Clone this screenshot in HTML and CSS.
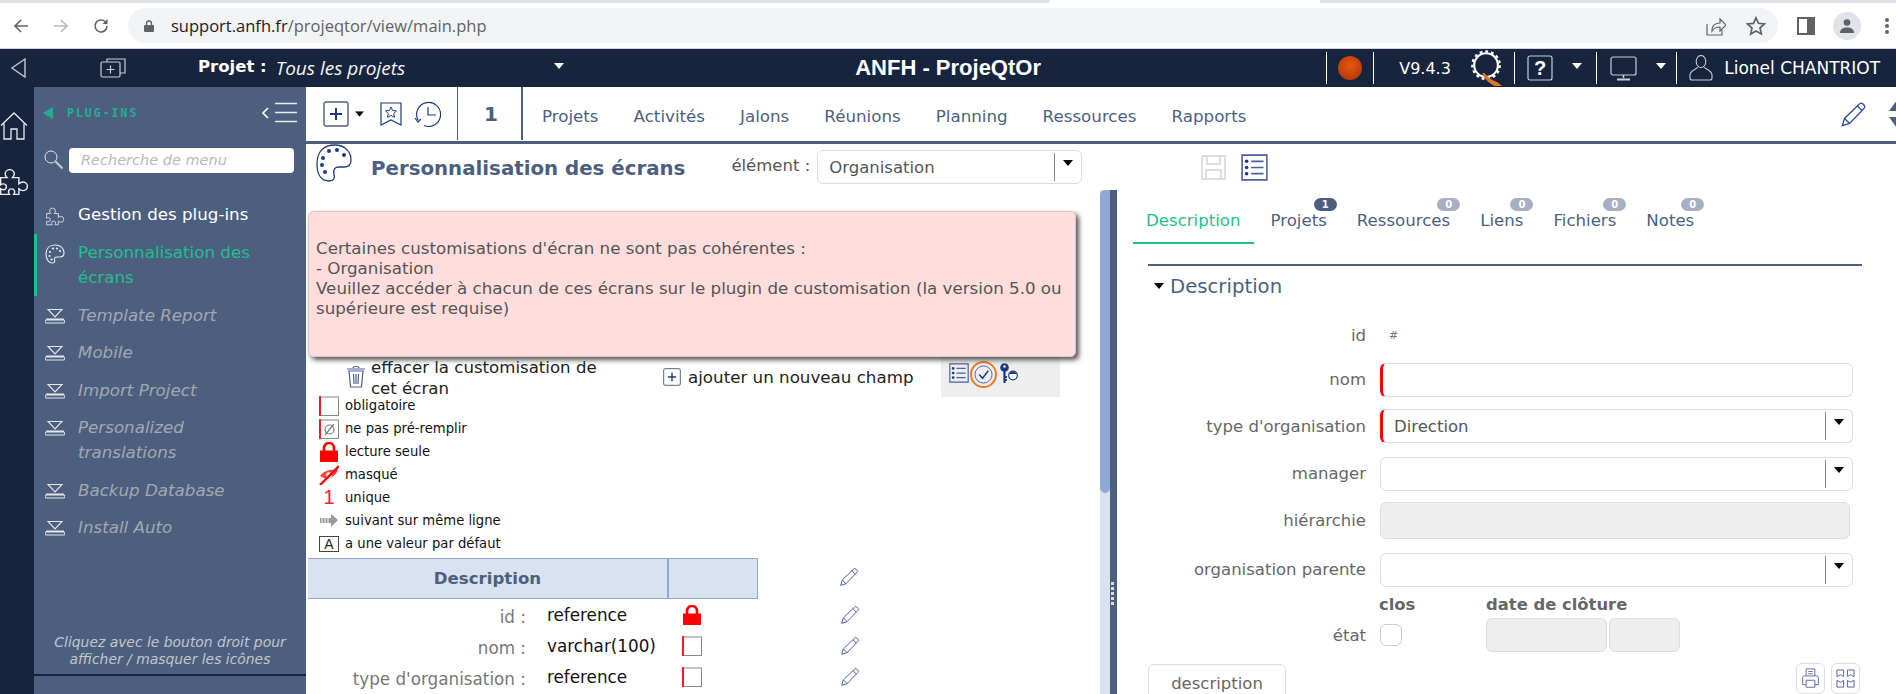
FILE: index.html
```html
<!DOCTYPE html>
<html lang="fr">
<head>
<meta charset="utf-8">
<title>ANFH - ProjeQtOr</title>
<link rel="stylesheet" href="styles.css">
</head>
<body>
<svg class="sprite" width="0" height="0" aria-hidden="true">
  <defs>
    <symbol id="puzzle" viewBox="0 0 24 24"><path d="M2 9h5c-1-1-1.500-2-1.500-3A3.500 3.500 0 0 1 12.500 6c0 1-.5 2-1.500 3h5v5c1-1 2-1.500 3-1.500a3.500 3.500 0 0 1 0 7c-1 0-2-.5-3-1.500v4.500h-4c.5-.7.800-1.300.800-2a2.400 2.400 0 0 0-4.800 0c0 .7.300 1.300.800 2H2V18c.6.500 1.300.8 2 .8a2.400 2.400 0 0 0 0-4.800c-.7 0-1.400.3-2 .8z" fill="none" stroke="currentColor" stroke-width="1.100"/></symbol>
    <symbol id="plugin" viewBox="0 0 20 16"><path d="M3 1.500h14L10 9zM1 11h18M1.500 12h17a1 1 0 0 1 0 3h-17a1 1 0 0 1 0-3z" fill="none" stroke="currentColor" stroke-width="1.100"/></symbol>
    <symbol id="pencil" viewBox="0 0 24 24"><path d="M2 22l2-6.500L17.500 2.500a2 2 0 0 1 2.700 0l1.300 1.300a2 2 0 0 1 0 2.700L8.500 20zM4 15.500L8.500 20M15.500 4.500l4 4" fill="none" stroke="currentColor" stroke-width="1.200"/></symbol>
    <symbol id="listicon" viewBox="0 0 24 24"><path d="M1 1h22v22H1z" fill="none" stroke="currentColor" stroke-width="1.400"/><path d="M9 6.500h11M9 12h11M9 17.500h11" stroke="currentColor" stroke-width="1.500"/><circle cx="5" cy="6.500" r="1.600" fill="#1f3a7a"/><circle cx="5" cy="12" r="1.600" fill="#1f3a7a"/><circle cx="5" cy="17.500" r="1.600" fill="#1f3a7a"/></symbol>
    <symbol id="plusbox" viewBox="0 0 26 26"><rect x="1" y="1" width="24" height="24" rx="2" fill="none" stroke="#4d5f7f" stroke-width="1.400"/><path d="M13 7v12M7 13h12" stroke="#1f3a7a" stroke-width="2"/></symbol>
    <symbol id="reqbox" viewBox="0 0 20 20"><rect x="1" y="1" width="18.500" height="18.500" fill="#fff" stroke="#888" stroke-width="1"/><rect width="2" height="20" fill="#f01d2d"/></symbol>
    <symbol id="lock" viewBox="0 0 18 20"><path d="M4 9V6a5 5 0 0 1 10 0v3" fill="none" stroke="#f00" stroke-width="2.600"/><rect y="8.500" width="18" height="11.500" fill="#f00"/></symbol>
    <symbol id="caretdown" viewBox="0 0 10 6"><path d="M0 0h10L5 6z" fill="currentColor"/></symbol>
  </defs>
</svg>

<div class="chrome">
  <div class="tabstrip"><span class="tab-gray tab-gray-a"></span><span class="tab-white"></span><span class="tab-gray"></span></div>
  <div class="toolbar">
    <svg class="nav nav-back" viewBox="0 0 16 16"><path d="M15 8H2M8 2L2 8l6 6" fill="none" stroke="#5f6368" stroke-width="1.600"/></svg>
    <svg class="nav nav-fwd" viewBox="0 0 16 16"><path d="M1 8h13M8 2l6 6-6 6" fill="none" stroke="#b8babd" stroke-width="1.600"/></svg>
    <svg class="nav nav-reload" viewBox="0 0 16 16"><path d="M14 8a6 6 0 1 1-1.800-4.300" fill="none" stroke="#5f6368" stroke-width="1.600"/><path d="M14.500 1v5h-5z" fill="#5f6368"/></svg>
    <div class="omnibox">
      <svg class="lock-mini" viewBox="0 0 10 12"><path d="M2.500 5V3.500a2.500 2.500 0 0 1 5 0V5" fill="none" stroke="#5f6368" stroke-width="1.300"/><rect y="5" width="10" height="7" rx="1" fill="#5f6368"/></svg>
      <span class="url"><span class="url-host">support.anfh.fr</span>/projeqtor/view/main.php</span>
      <svg class="omni-share" viewBox="0 0 20 20"><path d="M1 8v11h15v-5" fill="none" stroke="#5f6368" stroke-width="1.200"/><path d="M6 15c0-6 4-8 8-8V3l6 6-6 6v-4c-3 0-6 1-8 4z" fill="none" stroke="#5f6368" stroke-width="1.200"/></svg>
      <svg class="omni-star" viewBox="0 0 20 20"><path d="M10 1.800l2.500 5.500 6 .6-4.500 4 1.300 6L10 15l-5.300 3 1.300-6-4.500-4 6-.6z" fill="none" stroke="#5f6368" stroke-width="1.700"/></svg>
    </div>
    <svg class="side-panel" viewBox="0 0 18 18"><rect x="1" y="1" width="16" height="16" fill="none" stroke="#5f6368" stroke-width="2"/><rect x="10" y="1" width="7" height="16" fill="#5f6368"/></svg>
    <div class="avatar"><svg viewBox="0 0 16 16"><circle cx="8" cy="4.500" r="3.300" fill="#5f6368"/><path d="M1 15c0-4 3-5.500 7-5.500s7 1.500 7 5.500z" fill="#5f6368"/></svg></div>
    <div class="dots"><i></i><i></i><i></i></div>
  </div>
</div>

<header class="topbar">
  <svg class="back-tri" viewBox="0 0 16 20"><path d="M15 1L2 10l13 9z" fill="none" stroke="#b9c0cc" stroke-width="1.500"/></svg>
  <svg class="windows-ic" viewBox="0 0 26 20"><path d="M7 4V1h18v14h-5" fill="none" stroke="#c8ced8" stroke-width="1.200"/><rect x="1" y="4" width="19" height="15" rx="1.500" fill="none" stroke="#c8ced8" stroke-width="1.200"/><path d="M10.500 7.500v8M6.500 11.500h8" stroke="#c8ced8" stroke-width="1.200"/></svg>
  <span class="proj-label">Projet :</span>
  <span class="proj-value">Tous les projets</span>
  <svg class="caret-w proj-caret" viewBox="0 0 10 6"><use href="#caretdown"/></svg>
  <div class="app-title">ANFH - ProjeQtOr</div>
  <span class="vsep"></span>
  <span class="status-dot"></span>
  <span class="vsep"></span>
  <span class="version">V9.4.3</span>
  <svg class="q-logo" viewBox="0 0 36 38"><circle cx="17" cy="16" r="12.500" fill="none" stroke="#fff" stroke-width="2.200"/><circle cx="17" cy="16" r="14.500" fill="none" stroke="#fff" stroke-width="2.400" stroke-dasharray="3 3.100"/><path d="M15 24c3 4 8 8 14 10l5 4h-8c-6-3-10-7-13-13z" fill="#e0762a"/></svg>
  <span class="vsep"></span>
  <svg class="help-ic" viewBox="0 0 26 26"><rect x="1" y="1" width="24" height="24" rx="2" fill="none" stroke="#c8ced8" stroke-width="1.200"/><text x="13" y="20" text-anchor="middle" class="help-q">?</text></svg>
  <svg class="caret-w" viewBox="0 0 10 6"><use href="#caretdown"/></svg>
  <span class="vsep"></span>
  <svg class="monitor-ic" viewBox="0 0 27 25"><rect x="1" y="1" width="25" height="18" rx="2" fill="none" stroke="#c8ced8" stroke-width="1.200"/><path d="M13.500 19v3" stroke="#c8ced8" stroke-width="1.500"/><path d="M7 23.500h13" stroke="#c8ced8" stroke-width="2"/></svg>
  <svg class="caret-w" viewBox="0 0 10 6"><use href="#caretdown"/></svg>
  <span class="vsep"></span>
  <svg class="user-ic" viewBox="0 0 24 26"><ellipse cx="12" cy="6.500" rx="4.800" ry="6" fill="none" stroke="#c8ced8" stroke-width="1.100"/><path d="M8.500 12c0 2-7.500 3-7.500 8v3a2 2 0 0 0 2 2h18a2 2 0 0 0 2-2v-3c0-5-7.500-6-7.500-8" fill="none" stroke="#c8ced8" stroke-width="1.100"/></svg>
  <span class="user-name">Lionel CHANTRIOT</span>
</header>

<div class="app">
  <nav class="rail">
    <svg class="rail-home" viewBox="0 0 28 28"><path d="M1 13.500L14 1l13 12.500M4 11.500V27h7V17h6v10h7V11.500" fill="none" stroke="#e8eaee" stroke-width="1.300"/></svg>
    <svg class="rail-puzzle" viewBox="1.500 2 21.500 21" preserveAspectRatio="none"><use href="#puzzle" width="24" height="24"/></svg>
  </nav>

  <aside class="sidebar">
    <div class="side-head">
      <span class="side-tri"></span>
      <span class="side-title">PLUG-INS</span>
      <svg class="side-collapse" viewBox="0 0 36 21"><path d="M6 6l-5 5 5 5" fill="none" stroke="#fff" stroke-width="1.600"/><path d="M13 1.500h22M13 10.500h22M13 19.500h22" stroke="#e8eaee" stroke-width="1.400"/></svg>
    </div>
    <div class="side-search">
      <svg class="search-ic" viewBox="0 0 20 20"><circle cx="7" cy="7" r="6" fill="none" stroke="#e2e5ea" stroke-width="1"/><path d="M11.500 11.500l7 7" stroke="#c9ced6" stroke-width="2"/></svg>
      <div class="search-box">Recherche de menu</div>
    </div>
    <ul class="side-menu">
      <li class="side-item side-plain"><svg class="side-ic"><use href="#puzzle"/></svg><span>Gestion des plug-ins</span></li>
      <li class="side-item side-active"><svg class="side-ic" viewBox="0 0 20 20"><path d="M10 1C4.500 1 1 4.500 1 10s3 9 6.500 9c2 0 2.500-1.500 2-3-.5-2 .5-3 2.500-3h3c2.500 0 4-1.500 4-4 0-5-4-8-8.500-8z" fill="none" stroke="#e8eaee" stroke-width="1.100"/><g fill="#e8eaee"><circle cx="5" cy="8" r="1.100"/><circle cx="8" cy="4.500" r="1.100"/><circle cx="12" cy="4.500" r="1.100"/><circle cx="15" cy="7" r="1.100"/><circle cx="4.500" cy="12" r="1.100"/><circle cx="6.500" cy="15.500" r="1.100"/></g></svg><span>Personnalisation des écrans</span></li>
      <li class="side-item side-dis"><svg class="side-ic" viewBox="0 0 20 16"><use href="#plugin"/></svg><span>Template Report</span></li>
      <li class="side-item side-dis"><svg class="side-ic" viewBox="0 0 20 16"><use href="#plugin"/></svg><span>Mobile</span></li>
      <li class="side-item side-dis"><svg class="side-ic" viewBox="0 0 20 16"><use href="#plugin"/></svg><span>Import Project</span></li>
      <li class="side-item side-dis"><svg class="side-ic" viewBox="0 0 20 16"><use href="#plugin"/></svg><span>Personalized translations</span></li>
      <li class="side-item side-dis"><svg class="side-ic" viewBox="0 0 20 16"><use href="#plugin"/></svg><span>Backup Database</span></li>
      <li class="side-item side-dis"><svg class="side-ic" viewBox="0 0 20 16"><use href="#plugin"/></svg><span>Install Auto</span></li>
    </ul>
    <div class="side-foot">Cliquez avec le bouton droit pour<br>afficher / masquer les icônes</div>
    <div class="side-end"></div>
  </aside>

  <main class="main">
    <div class="menubar">
      <svg class="mb-plus"><use href="#plusbox"/></svg>
      <svg class="mb-caret" viewBox="0 0 10 6"><use href="#caretdown"/></svg>
      <svg class="mb-book" viewBox="0 0 22 24"><path d="M1 1h20v22l-10-5-10 5z" fill="none" stroke="#1f3a7a" stroke-width="1.200"/><path d="M11 5l1.700 3.500 3.800.4-2.800 2.600.8 3.800L11 13.400l-3.500 1.900.8-3.800-2.800-2.600 3.800-.4z" fill="none" stroke="#1f3a7a" stroke-width="1"/></svg>
      <svg class="mb-hist" viewBox="0 0 27 26"><path d="M4 19A12 12 0 1 1 10 24.500" fill="none" stroke="#1f3a7a" stroke-width="1.200"/><path d="M14 6v8h8M1 17l3 4 3-3" fill="none" stroke="#1f3a7a" stroke-width="1.200"/></svg>
      <span class="mb-sep"></span>
      <span class="mb-count">1</span>
      <span class="mb-sep mb-sep-strong"></span>
      <a class="mb-link mb-first">Projets</a>
      <a class="mb-link">Activités</a>
      <a class="mb-link">Jalons</a>
      <a class="mb-link">Réunions</a>
      <a class="mb-link">Planning</a>
      <a class="mb-link">Ressources</a>
      <a class="mb-link">Rapports</a>
      <svg class="mb-pencil"><use href="#pencil"/></svg>
      <div class="mb-updown"><span class="tri-up"></span><span class="tri-down"></span></div>
    </div>

    <div class="titlebar">
      <svg class="title-ic" viewBox="0 0 38 38"><path d="M20 1C9 1 2 7 2 20s6 17 12 17c5 0 6-3 5-7-1-5 1-7 5-7h5c5 0 7-3 7-7C36 7 29 1 20 1z" fill="none" stroke="#1f3a7a" stroke-width="1.300"/><g fill="#1f3a7a"><circle cx="8" cy="14" r="2"/><circle cx="14" cy="7" r="2"/><circle cx="22" cy="6" r="2"/><circle cx="29" cy="11" r="2"/><circle cx="7" cy="21" r="2"/><circle cx="10" cy="28" r="2"/></g></svg>
      <h1 class="title-text">Personnalisation des écrans</h1>
      <span class="title-el">élément :</span>
      <div class="combo combo-title"><span class="combo-val">Organisation</span><span class="combo-arrow"><svg viewBox="0 0 10 6"><use href="#caretdown"/></svg></span></div>
      <svg class="title-save" viewBox="0 0 25 25"><path d="M1 1h23v23H1zM6 1v8h13V1M5 24v-9h15v9" fill="none" stroke="#d2d2d2" stroke-width="1.400"/></svg>
      <svg class="title-list"><use href="#listicon"/></svg>
    </div>

    <div class="panes">
      <section class="left">
        <div class="alert">Certaines customisations d'écran ne sont pas cohérentes :<br>- Organisation<br>Veuillez accéder à chacun de ces écrans sur le plugin de customisation (la version 5.0 ou supérieure est requise)</div>

        <div class="actions">
          <svg class="trash" viewBox="0 0 20 24"><path d="M1 4h18M7 3c0-2 6-2 6 0M3 6l1.500 16h11L17 6zM7.500 9l.5 10M10 9v10M12.500 9l-.5 10" fill="none" stroke="#4d5f9f" stroke-width="1.200"/></svg>
          <span class="act-clear">effacer la customisation de cet écran</span>
          <svg class="act-plus"><use href="#plusbox"/></svg>
          <span class="act-add">ajouter un nouveau champ</span>
          <div class="act-box">
            <svg class="act-list"><use href="#listicon"/></svg>
            <span class="act-ring"><svg viewBox="0 0 20 20"><circle cx="10" cy="10" r="9" fill="none" stroke="#4d5f9f" stroke-width="1"/><path d="M5.500 10l3.500 4 6-8" fill="none" stroke="#1f3a7a" stroke-width="1.500"/></svg></span>
            <svg class="act-key" viewBox="0 0 18 20"><circle cx="4.500" cy="4.500" r="4.300" fill="#1f3a7a"/><circle cx="4.500" cy="3.500" r="1.200" fill="#eee"/><path d="M4.500 8v12M4.500 14h2.500M4.500 17h2.500" stroke="#1f3a7a" stroke-width="2.200"/><circle cx="13" cy="12.500" r="4.300" fill="#fff" stroke="#1f3a7a" stroke-width="1.200"/><path d="M9 11c2-3 6-3 8 0z" fill="#1f3a7a"/></svg>
          </div>
        </div>

        <ul class="legend">
          <li><svg class="lg-ic"><use href="#reqbox"/></svg>obligatoire</li>
          <li><svg class="lg-ic" viewBox="0 0 20 20"><use href="#reqbox"/><circle cx="10.500" cy="10.500" r="4.500" fill="none" stroke="#777" stroke-width="1.200"/><path d="M6 16l9-11" stroke="#777" stroke-width="1.200"/></svg>ne pas pré-remplir</li>
          <li><svg class="lg-ic" viewBox="0 0 18 20"><use href="#lock"/></svg>lecture seule</li>
          <li><svg class="lg-ic" viewBox="0 0 20 20"><path d="M1 11c4-6 11-7 18-6-3 8-12 11-18 6z" fill="#f44"/><circle cx="10" cy="10" r="2.800" fill="#fff"/><path d="M1 20L20 1" stroke="#f00" stroke-width="2.400"/></svg>masqué</li>
          <li><span class="lg-one">1</span>unique</li>
          <li><svg class="lg-ic" viewBox="0 0 20 14"><path d="M1 4h11V0l7 6-7 7V9H1z" fill="#999"/><path d="M3 4v5M6 4v5M9 4v5" stroke="#fff" stroke-width="1"/></svg>suivant sur même ligne</li>
          <li><span class="lg-a">A</span>a une valeur par défaut</li>
        </ul>

        <div class="tbl-head">
          <div class="th th-main">Description</div>
          <div class="th th-side"></div>
          <svg class="tbl-pencil th-pencil"><use href="#pencil"/></svg>
        </div>
        <div class="tbl-row">
          <span class="r-label">id :</span><span class="r-val">reference</span>
          <svg class="r-ic r-lock" viewBox="0 0 18 20"><use href="#lock"/></svg>
          <svg class="tbl-pencil"><use href="#pencil"/></svg>
        </div>
        <div class="tbl-row">
          <span class="r-label">nom :</span><span class="r-val">varchar(100)</span>
          <svg class="r-ic"><use href="#reqbox"/></svg>
          <svg class="tbl-pencil"><use href="#pencil"/></svg>
        </div>
        <div class="tbl-row">
          <span class="r-label">type d'organisation :</span><span class="r-val">reference</span>
          <svg class="r-ic"><use href="#reqbox"/></svg>
          <svg class="tbl-pencil"><use href="#pencil"/></svg>
        </div>
      </section>

      <div class="scroll"><div class="scroll-thumb"></div></div>
      <div class="splitter"><span class="grip"></span></div>

      <section class="right">
        <div class="tabs">
          <a class="tab tab-on">Description</a>
          <a class="tab">Projets<b class="badge badge-on">1</b></a>
          <a class="tab">Ressources<b class="badge">0</b></a>
          <a class="tab">Liens<b class="badge">0</b></a>
          <a class="tab">Fichiers<b class="badge">0</b></a>
          <a class="tab">Notes<b class="badge">0</b></a>
        </div>
        <div class="sect-head"><span class="sect-caret"></span>Description</div>

        <div class="frow frow-id"><label>id</label><span class="hash">#</span></div>
        <div class="frow frow-nom"><label>nom</label><div class="input req"></div></div>
        <div class="frow frow-type"><label>type d'organisation</label><div class="combo req"><span class="combo-val">Direction</span><span class="combo-arrow"><svg viewBox="0 0 10 6"><use href="#caretdown"/></svg></span></div></div>
        <div class="frow"><label>manager</label><div class="combo"><span class="combo-val"></span><span class="combo-arrow"><svg viewBox="0 0 10 6"><use href="#caretdown"/></svg></span></div></div>
        <div class="frow frow-h"><label>hiérarchie</label><div class="input ro ro-h"></div></div>
        <div class="frow"><label>organisation parente</label><div class="combo"><span class="combo-val"></span><span class="combo-arrow"><svg viewBox="0 0 10 6"><use href="#caretdown"/></svg></span></div></div>
        <div class="sub-heads"><b class="sh-clos">clos</b><b class="sh-date">date de clôture</b></div>
        <div class="frow frow-etat"><label>état</label><span class="check"></span><div class="input ro date-a"></div><div class="input ro date-b"></div></div>
        <div class="note-row">
          <div class="note-tab">description</div>
          <div class="note-btn note-first"><svg viewBox="0 0 20 24"><path d="M5 9V1h10v8M3 9h14a2 2 0 0 1 2 2v8h-4M5 19H1v-8a2 2 0 0 1 2-2M5 14h10v8H5zM7.500 4h5M7.500 6.500h5" fill="none" stroke="#4d5f9f" stroke-width="1"/></svg></div>
          <div class="note-btn"><svg viewBox="0 0 20 20"><path d="M1 1h7v7L5 6 1 8zM12 1h7v7l-4-2-3 2zM1 12l4 2 3-2v7H1zM12 12l3 2 4-2v7h-7z" fill="none" stroke="#4d5f9f" stroke-width="1"/></svg></div>
        </div>
      </section>
    </div>
  </main>
</div>
</body>
</html>
```
FILE: styles.css
```css
* { box-sizing: border-box; }
html, body { margin: 0; height: 694px; overflow: hidden; background: #fff; }
body { display: flex; flex-direction: column; font-family: "DejaVu Sans", Verdana, sans-serif; color: #000; }
.sprite { position: absolute; }
ul { list-style: none; margin: 0; padding: 0; }

/* browser chrome */
.chrome { height: 49px; flex: none; border-bottom: 1px solid #d3d5d9; background: #fff; }
.tabstrip { display: flex; height: 3px; }
.tab-gray { flex: 1; background: #dee1e6; }
.tab-gray-a { flex: none; width: 1050px; border-bottom-right-radius: 3px; }
.tab-white { width: 270px; background: #fff; }
.toolbar { display: flex; align-items: center; height: 45px; padding-left: 13px; }
.nav { width: 16px; height: 16px; flex: none; }
.nav-fwd { margin-left: 24px; }
.nav-reload { margin-left: 24px; }
.omnibox { margin-left: 19px; width: 1650px; height: 35px; border-radius: 18px; background: #f1f3f4; display: flex; align-items: center; padding-left: 16px; }
.lock-mini { width: 10px; height: 12px; flex: none; }
.url { margin-left: 17px; font: 16.500px "Open Sans", sans-serif; color: #5f6368; }
.url-host { color: #202124; }
.omni-share { width: 20px; height: 20px; margin-left: auto; }
.omni-star { width: 20px; height: 20px; margin-left: 20px; margin-right: 12px; }
.side-panel { width: 18px; height: 18px; margin-left: 19px; }
.avatar { width: 28px; height: 28px; border-radius: 50%; background: #e0e3e8; margin-left: 18px; display: flex; align-items: center; justify-content: center; }
.avatar svg { width: 16px; height: 16px; }
.dots { margin-left: 24px; display: flex; flex-direction: column; gap: 2px; }
.dots i { width: 4px; height: 4px; border-radius: 50%; background: #5f6368; }

/* header */
.topbar { height: 38px; flex: none; background: #16243d; color: #fff; display: flex; align-items: center; padding-left: 10px; position: relative; }
.back-tri { width: 16px; height: 20px; flex: none; }
.windows-ic { width: 26px; height: 20px; margin-left: 74px; flex: none; }
.proj-label { margin-left: 72px; font: bold 16.500px "DejaVu Sans", sans-serif; position: relative; top: -2px; }
.proj-value { margin-left: 9px; font: italic 19px "Open Sans", sans-serif; color: #f4f4f4; }
.caret-w { width: 10px; height: 6px; margin-left: 17px; color: #fff; flex: none; position: relative; top: -2px; }
.proj-caret { margin-left: 149px; }
.app-title { margin-left: 291px; width: 471px; font: bold 22px "Liberation Sans", sans-serif; }
.vsep { width: 1px; height: 32px; background: #fff; flex: none; }
.status-dot { width: 24px; height: 24px; margin: 0 11px; border-radius: 50%; background: radial-gradient(circle at 50% 40%, #e8550f, #a83306); flex: none; }
.version { margin-left: 25px; font-size: 16px; width: 50px; white-space: nowrap; }
.q-logo { width: 36px; height: 36px; margin-left: 20px; margin-right: 9px; flex: none; }
.help-ic { width: 26px; height: 26px; margin-left: 12px; flex: none; }
.help-q { font: bold 20px "Liberation Sans", sans-serif; fill: #fff; }
.topbar .help-ic + .caret-w { margin-left: 19px; }
.topbar .help-ic + .caret-w + .vsep { margin-left: 14px; }
.monitor-ic { width: 27px; height: 25px; margin-left: 13px; flex: none; }
.monitor-ic + .caret-w { margin-left: 19px; }
.monitor-ic + .caret-w + .vsep { margin-left: 10px; }
.user-ic { width: 24px; height: 26px; margin-left: 12px; flex: none; }
.user-name { margin-left: 11px; font-size: 17px; white-space: nowrap; }

/* layout */
.app { flex: 1; min-height: 0; display: flex; }
.rail { width: 34px; flex: none; background: #16243d; color: #e8eaee; display: flex; flex-direction: column; }
.rail-home { width: 28px; height: 28px; margin-top: 25px; flex: none; }
.rail-puzzle { width: 28px; height: 26px; margin-top: 29px; flex: none; }

/* sidebar */
.sidebar { width: 272px; flex: none; background: #4d5f7f; display: flex; flex-direction: column; }
.side-head { display: flex; align-items: center; height: 51px; padding-left: 9px; }
.side-tri { width: 0; height: 0; border: 6.500px solid transparent; border-left: 0; border-right: 10px solid #1eaf95; }
.side-title { margin-left: 14px; font: bold 11.500px "DejaVu Sans Mono", monospace; letter-spacing: 2px; color: #1eaf95; }
.side-collapse { width: 36px; height: 21px; margin-left: auto; margin-right: 8px; }
.side-search { display: flex; align-items: center; height: 30px; padding-left: 10px; margin-top: 7px; }
.search-ic { width: 20px; height: 20px; flex: none; }
.search-box { width: 225px; height: 25px; margin-left: 5px; border-radius: 4px; background: #fff; padding-left: 12px; font: italic 14.500px/25px "DejaVu Sans", sans-serif; color: #b8b8b8; }
.side-menu { margin-top: 20px; }
.side-item { display: flex; padding: 6.500px 10px 6px 8px; line-height: 25px; font-size: 16.700px; border-left: 3px solid transparent; }
.side-ic { width: 20px; height: 22px; margin-top: 3px; flex: none; }
.side-item span { margin-left: 13px; width: 190px; }
.side-plain { color: #fff; padding-bottom: 7px; }
.side-plain .side-ic { color: #d8dce2; }
.side-active { color: #1fbf8f; border-left-color: #1fbf8f; }
.side-dis { color: #a3a8af; font-style: italic; }
.side-dis .side-ic { color: #e4e6ea; height: 16px; margin-top: 5px; }
.side-foot { margin-top: auto; text-align: center; font-size: 13.900px; font-style: italic; line-height: 17px; color: #c2c6cc; padding-bottom: 6px; white-space: nowrap; }
.side-end { height: 20px; flex: none; border-top: 2px solid #16243d; }

/* main */
.main { flex: 1; min-width: 0; display: flex; flex-direction: column; overflow: hidden; }
.menubar { height: 57px; flex: none; border-bottom: 3px solid #4d5f7f; display: flex; align-items: center; padding-left: 17px; position: relative; }
.mb-plus { width: 26px; height: 26px; flex: none; }
.mb-caret { width: 9px; height: 6px; margin-left: 6px; flex: none; color: #000; }
.mb-book { width: 22px; height: 24px; margin-left: 16px; flex: none; }
.mb-hist { width: 27px; height: 26px; margin-left: 12px; flex: none; }
.mb-sep { width: 1px; height: 53px; background: #4d5f7f; flex: none; margin-left: 16px; align-self: flex-start; }
.mb-sep-strong { width: 2px; margin-left: 23px; }
.mb-count { margin-left: 26px; font: bold 20px "DejaVu Sans", sans-serif; color: #4d5f7f; }
.mb-link { font-size: 16.700px; color: #4d5f7f; margin-left: 35px; white-space: nowrap; position: relative; top: 2px; }
.mb-first { margin-left: 19px; }
.mb-pencil { width: 27px; height: 27px; margin-left: auto; margin-right: 29px; color: #2f4f9a; flex: none; }
.mb-updown { display: flex; flex-direction: column; gap: 6px; position: absolute; right: -9px; top: 13px; }
.tri-up, .tri-down { width: 0; height: 0; border: 8px solid transparent; border-top: 0; border-bottom: 11px solid #4d5f7f; }
.tri-down { border-bottom: 0; border-top: 11px solid #4d5f7f; }

.titlebar { height: 46px; flex: none; display: flex; align-items: center; padding-left: 9px; }
.title-ic { width: 38px; height: 38px; flex: none; margin-top: -9px; }
.title-text { margin: 0 0 0 18px; font: bold 19.800px "DejaVu Sans", sans-serif; color: #4d5f7f; white-space: nowrap; position: relative; top: 1px; }
.title-el { margin-left: 46px; font-size: 16.500px; color: #555; white-space: nowrap; position: relative; top: -2px; }
.combo { display: flex; align-items: center; height: 34px; width: 473px; border: 1px solid #ddd; border-radius: 6px; background: #fff; flex: none; }
.combo-title { margin-left: 7px; width: 265px; }
.combo-val { flex: 1; padding-left: 11px; font-size: 16.500px; color: #555; }
.combo-arrow { width: 27px; height: 28px; border-left: 1px solid #888; display: flex; justify-content: center; padding-top: 7px; color: #000; }
.combo-arrow svg { width: 10px; height: 6px; }
.title-save { width: 25px; height: 25px; margin-left: 119px; flex: none; }
.title-list { width: 27px; height: 27px; margin-left: 15px; flex: none; color: #4d5f9f; }

.panes { flex: 1; min-height: 0; display: flex; }
.left { width: 794px; flex: none; position: relative; overflow: hidden; padding-top: 167px; }
.scroll { width: 10px; flex: none; background: #d9e2f0; }
.scroll-thumb { height: 303px; background: #8fa8d6; border-radius: 5px 0 5px 5px; }
.splitter { width: 7px; flex: none; background: #4d5f7f; position: relative; }
.grip { position: absolute; left: 1px; top: 392px; width: 3px; height: 25px; background: repeating-linear-gradient(#ddd 0 3px, #4d5f7f 3px 5px); }

.alert { position: absolute; left: 2px; top: 21px; width: 768px; height: 146px; padding: 26px 7px 0; background: #ffdddd; border: 1px solid #d8c8c8; border-radius: 5px; box-shadow: 3px 3px 5px #555; font-size: 16.700px; line-height: 20px; color: #555; z-index: 1; }

.actions { display: flex; height: 40px; align-items: center; padding-left: 40px; }
.trash { width: 20px; height: 24px; flex: none; }
.act-clear { width: 230px; margin-left: 5px; font-size: 16.600px; line-height: 21px; color: #222; position: relative; top: 1px; }
.act-plus { width: 18px; height: 18px; margin-left: 62px; flex: none; }
.act-add { margin-left: 7px; font-size: 16.700px; color: #222; white-space: nowrap; }
.act-box { width: 119px; height: 40px; margin-left: 27px; background: #eee; display: flex; align-items: flex-start; padding: 6px 0 0 8px; flex: none; }
.act-list { width: 20px; height: 20px; flex: none; color: #4d5f9f; }
.act-ring { width: 27px; height: 27px; border: 2px solid #ee7a20; border-radius: 50%; margin: -2px 0 0 1px; padding: 2px; display: flex; flex: none; }
.act-ring svg { width: 19px; height: 19px; }
.act-key { width: 18px; height: 20px; margin-left: 3px; flex: none; }

.legend { padding-left: 13px; margin-top: -3px; }
.legend li { height: 23px; display: flex; align-items: center; font-size: 13.200px; color: #111; white-space: nowrap; }
.lg-ic { width: 20px; height: 20px; margin-right: 6px; flex: none; }
.lg-one { width: 20px; margin-right: 6px; text-align: center; font: 20px "Liberation Sans", sans-serif; color: #f02030; }
.lg-a { width: 20px; height: 16px; margin-right: 6px; border: 1px solid #444; text-align: center; font: 14px/14px "Liberation Sans", sans-serif; color: #222; }

.tbl-head { display: flex; height: 41px; margin: 3px 0 0 2px; align-items: center; }
.th { height: 41px; background: #d9e2f0; border: 1px solid #8fa8d6; border-left: 0; }
.th-main { width: 361px; border-right: 2px solid #8fa8d6; text-align: center; font: bold 16.600px/39px "DejaVu Sans", sans-serif; color: #4d5f7f; border-left: 0; }
.th-side { width: 89px; }
.th-pencil { margin-left: 81px; margin-top: -4px; }
.tbl-pencil { width: 20px; height: 20px; flex: none; color: #4d5f9f; }
.tbl-row { display: flex; height: 31px; align-items: center; }
.r-label { width: 220px; text-align: right; font-size: 16.800px; color: #777; white-space: nowrap; position: relative; top: 2px; flex: none; }
.r-val { width: 135px; margin-left: 21px; font-size: 16.800px; color: #111; white-space: nowrap; flex: none; }
.r-ic { width: 20px; height: 20px; flex: none; margin-left: 0; }
.r-ic + .tbl-pencil { margin-left: 138px; }

/* right */
.right { flex: 1; min-width: 0; position: relative; overflow: hidden; }
.tabs { display: flex; height: 76px; padding: 10px 0 0 16px; margin-bottom: 2px; position: relative; }
.tabs::after { content: ""; position: absolute; left: 31px; right: 34px; bottom: 0; height: 2px; background: #4d5f7f; }
.tab { position: relative; height: 44px; padding: 11px 13px 0; margin-right: 4px; font-size: 16.600px; color: #4d5f7f; white-space: nowrap; line-height: 20px; }
.tab-on { color: #1fbf8f; border-bottom: 2.500px solid #1fbf8f; }
.badge { position: absolute; top: -2px; right: 3px; width: 23px; height: 13px; border-radius: 7px; background: #a7b0c2; color: #fff; font: bold 10px/13px "DejaVu Sans", sans-serif; text-align: center; }
.badge-on { background: #4d5f7f; }
.sect-head { display: flex; align-items: center; height: 36px; padding-left: 37px; font-size: 19.700px; color: #4d5f7f; }
.sect-caret { width: 0; height: 0; border: 5.500px solid transparent; border-bottom: 0; border-top: 6px solid #000; margin-right: 6px; }
.frow { display: flex; align-items: center; height: 47px; padding-right: 41px; }
.frow label { width: 249px; margin-right: 14px; text-align: right; font-size: 16.500px; color: #666; white-space: nowrap; flex: none; }
.frow-id { height: 44px; margin-top: 9px; }
.frow-id .hash { font-size: 11px; color: #777; margin-left: 9px; }
.frow-nom { height: 45px; }
.frow-type { height: 48px; }
.frow-h { height: 51px; margin-top: -2px; }
.input { width: 473px; height: 34px; border: 1px solid #ddd; border-radius: 6px; background: #fff; flex: none; }
.req { border-left: 3px solid #f00; }
.ro { background: #eee; }
.ro-h { width: 470px; height: 37px; }
.sub-heads { display: flex; height: 18px; margin-top: 2px; padding-left: 262px; font-size: 16.400px; color: #666; }
.sh-clos { width: 107px; }
.frow-etat { height: 38px; margin-top: 3px; }
.check { width: 22px; height: 22px; border: 1px solid #ccc; border-radius: 6px; flex: none; margin-right: 84px; }
.date-a { width: 121px; height: 34px; }
.date-b { width: 71px; height: 34px; margin-left: 2px; }
.note-row { display: flex; margin-top: 10px; padding-left: 31px; align-items: flex-start; }
.note-tab { width: 138px; height: 40px; border: 1px solid #ddd; border-radius: 6px 6px 0 0; text-align: center; font-size: 16.500px; line-height: 37px; color: #666; }
.note-btn { width: 29px; height: 31px; border: 1px solid #ddd; border-radius: 6px; margin-left: 6px; display: flex; align-items: center; justify-content: center; margin-top: -1px; }
.note-first { margin-left: 510px; }
.note-btn svg { width: 19px; height: 21px; }
```
